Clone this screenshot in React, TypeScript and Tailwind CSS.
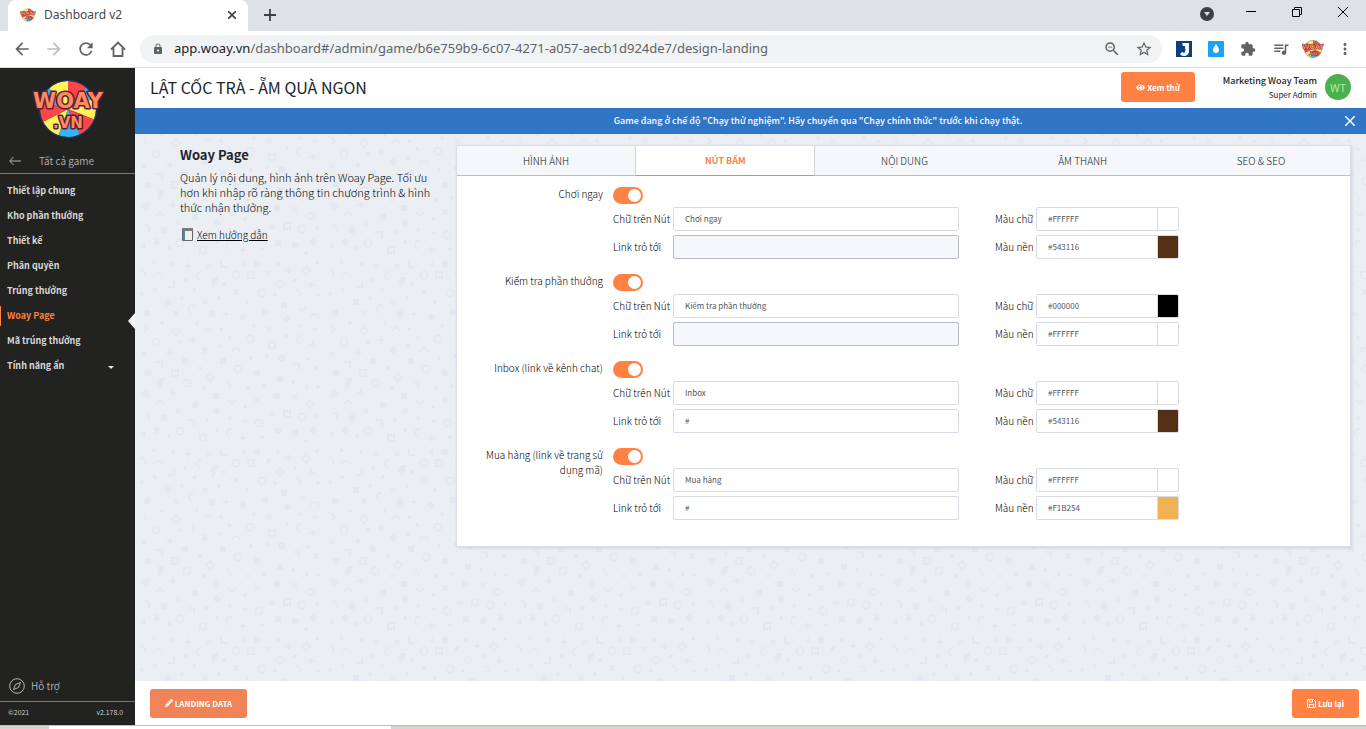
import { useState } from "react";
import type { ReactNode } from "react";
import { FaEye, FaPencilAlt } from "react-icons/fa";
import { MdArrowBack, MdArrowForward, MdExtension, MdLock, MdMoreVert, MdQueueMusic, MdRefresh, MdStarBorder, MdZoomOut } from "react-icons/md";

const ui = "font-['Noto_Sans_CJK_SC','Noto_Sans',sans-serif]";
const chrome = "font-['Noto_Sans','Open_Sans',sans-serif]";

const menu = ["Thiết lập chung", "Kho phần thưởng", "Thiết kế", "Phân quyền", "Trúng thưởng", "Woay Page", "Mã trúng thưởng", "Tính năng ẩn"];
const tabs = ["HÌNH ẢNH", "NÚT BẤM", "NỘI DUNG", "ÂM THANH", "SEO & SEO"];

const groups = [
  { id: "play", title: "Chơi ngay", text: "Chơi ngay", link: null, color: "#FFFFFF", bg: "#543116" },
  { id: "check", title: "Kiểm tra phần thưởng", text: "Kiểm tra phần thưởng", link: null, color: "#000000", bg: "#FFFFFF" },
  { id: "inbox", title: "Inbox (link về kênh chat)", text: "Inbox", link: "#", color: "#FFFFFF", bg: "#543116" },
  { id: "buy", title: "Mua hàng (link về trang sử dụng mã)", text: "Mua hàng", link: "#", color: "#FFFFFF", bg: "#F1B254" },
];

// [kind, x, y] inside one 188x188 tile
const shapes: [string, number, number][] = [
  ["tri", 14, 2], ["dot", 33, 4], ["plus", 48, 6], ["x", 69, 6], ["l", 84, 5], ["left", 103, 4], ["disc", 117, 4], ["dot", 138, 4], ["plus", 149, 10], ["dia", 166, 11], ["dot", 177, 3],
  ["rarc", 4, 13], ["arc", 18, 15], ["larc", 59, 16], ["ring", 96, 15], ["box", 111, 15], ["tri2", 129, 13], ["j", 31, 24], ["dot", 45, 20], ["bolt", 75, 23], ["dot", 84, 24],
  ["dia", 140, 24], ["dot", 155, 20], ["plus", 171, 25], ["tri", 15, 29], ["tri3", 54, 29], ["x", 96, 32], ["ring", 122, 33], ["rarc", 159, 33], ["dot", 2, 34], ["dot", 42, 38], ["dot", 79, 38], ["dot", 135, 35], ["dot", 178, 35],
  ["sq", 28, 42], ["x", 65, 42], ["dot", 107, 42], ["sq", 144, 45], ["larc", 51, 49], ["down", 162, 49], ["disc", 7, 53], ["x", 36, 53], ["disc", 72, 54], ["plus", 86, 54], ["sdia", 103, 57], ["disc", 125, 52], ["sdia", 147, 59], ["arc", 175, 56],
  ["dot", 22, 63], ["left", 56, 63], ["dot", 114, 66], ["dot", 160, 66], ["right", 5, 69], ["dia", 36, 71], ["up", 68, 69], ["dot", 81, 69], ["x", 129, 69], ["dtri", 175, 69],
  ["ring", 16, 82], ["dot", 40, 82], ["plus", 53, 80], ["tri", 90, 77], ["dot", 80, 86], ["ring", 110, 79], ["box", 132, 85], ["dot", 147, 76], ["larc", 159, 80], ["plus", 173, 85],
  ["x", 4, 94], ["plus", 30, 93], ["sdia", 65, 90], ["arc", 96, 90], ["disc", 45, 101], ["sq", 83, 101], ["dot", 111, 98], ["dot", 127, 96], ["disc", 142, 98], ["dot", 168, 99],
  ["seven", 19, 105], ["dot", 60, 108], ["ring", 98, 109], ["seven", 156, 107], ["x", 176, 108], ["disc", 8, 113], ["box", 35, 113], ["dia", 70, 117], ["disc", 117, 113], ["sq", 140, 119],
  ["bolt", 21, 124], ["ring", 47, 123], ["dot", 64, 128], ["rarc", 89, 125], ["dot", 108, 128], ["dot", 124, 126], ["dot", 153, 122], ["left", 166, 127], ["dot", 178, 127],
  ["sdia", 6, 134], ["plus", 33, 133], ["sq", 76, 136], ["disc", 137, 136], ["x", 155, 137], ["up", 20, 142], ["disc", 55, 145], ["down", 92, 142], ["x", 117, 140], ["dia", 170, 144],
  ["x", 38, 151], ["sdia", 77, 151], ["dot", 105, 147], ["rarc", 8, 156], ["disc", 24, 158], ["dot", 90, 158], ["plus", 132, 155], ["box", 147, 154], ["ring", 162, 157], ["dot", 177, 156],
  ["seven", 51, 163], ["dot", 67, 160], ["dtri", 105, 161], ["ring", 119, 163], ["sdia", 17, 170], ["ring", 40, 171], ["dot", 77, 170], ["larc", 89, 173], ["sq", 138, 171], ["disc", 155, 173], ["sdia", 173, 170],
  ["left", 3, 174], ["dot", 29, 176], ["box", 63, 178], ["plus", 103, 178], ["dtri", 122, 177], ["dot", 166, 181],
];

const outlines: Record<string, string> = {
  plus: "M-3.5 0h7M0-3.5v7",
  x: "M-2.5-2.5l5 5M2.5-2.5l-5 5",
  l: "M-3-4v6h6",
  j: "M3-3v6h-6",
  seven: "M-3-3h6v6",
  dia: "M0-4l4 4-4 4-4-4z",
  box: "M-3-3h6v6h-6z",
  arc: "M-4 2a4 4 0 0 1 8 0",
  larc: "M3-4a4 4 0 0 0-2 8",
  rarc: "M-3-3a4 4 0 0 1 3 7",
  up: "M-4 2l4-4 4 4",
  down: "M-4-2l4 4 4-4",
  right: "M-2-4l4 4-4 4",
};
const solids: Record<string, string> = {
  tri: "M-2-3v5h5z",
  tri2: "M-2-2h5l-5 5z",
  tri3: "M2-3v5h-5z",
  left: "M2-3v6l-3-3z",
  dtri: "M-3-1h6l-3 3z",
  sq: "M-3-3h6v6h-6z",
  sdia: "M0-4l4 4-4 4-4-4z",
  bolt: "M-2-6h6l-3 5h2l-7 8 2-6h-3z",
};

function Shape({ kind, x, y }: { kind: string; x: number; y: number }) {
  if (kind === "dot") return <circle cx={x} cy={y} r="1.7" fill="#e1e7ef" />;
  if (kind === "disc") return <circle cx={x} cy={y} r="3.5" fill="#e0e9f2" />;
  if (kind === "ring") return <circle cx={x} cy={y} r="3.6" fill="none" stroke="#e2e8ef" strokeWidth="1.500" />;
  if (solids[kind]) return <path transform={`translate(${x} ${y})`} d={solids[kind]} fill="#e0e8f1" />;
  return <path transform={`translate(${x} ${y})`} d={outlines[kind]} fill="none" stroke="#e2e8ef" strokeWidth="1.500" />;
}

function Confetti() {
  return (
    <svg className="absolute inset-0 w-full h-full" aria-hidden="true">
      <pattern id="confetti" x="5" y="126" width="188" height="188" patternUnits="userSpaceOnUse">
        {shapes.map(([kind, x, y]) => <Shape key={`${x}-${y}`} kind={kind} x={x} y={y} />)}
      </pattern>
      <rect width="100%" height="100%" fill="url(#confetti)" />
    </svg>
  );
}

// start angle and colour of every slice
const wheel: [number, string][] = [
  [0, "#ff4545"], [40, "#35b6f2"], [68, "#fff25a"], [112, "#ff4545"], [155, "#35b6f2"],
  [200, "#fff25a"], [243, "#ff4545"], [285, "#35b6f2"], [318, "#fff25a"],
];

function Logo({ className }: { className: string }) {
  const point = (deg: number) => {
    const a = (deg * Math.PI) / 180;
    return `${(36 + 28 * Math.sin(a)).toFixed(2)} ${(30 - 28 * Math.cos(a)).toFixed(2)}`;
  };
  return (
    <svg viewBox="0 0 72 60" className={className} aria-hidden="true">
      {wheel.map(([from, fill], i) => (
        <path key={from} d={`M36 30L${point(from)}A28 28 0 0 1 ${point(wheel[i + 1]?.[0] ?? 360)}z`} fill={fill} />
      ))}
      <circle cx="36" cy="30" r="28.500" fill="none" stroke="#1c3a6e" strokeWidth="1.200" />
      <g fill="#ff8a5c" stroke="#5b1f3d" strokeWidth="3" strokeLinejoin="round" textAnchor="middle" className="font-['DejaVu_Sans',sans-serif] font-bold [paint-order:stroke]">
        <text x="36" y="29" fontSize="21">WOAY</text>
        <text x="36" y="49" fontSize="15">.VN</text>
      </g>
    </svg>
  );
}

function BrowserBar() {
  return (
    <header className={`${chrome} shrink-0 bg-[#dee1e6] text-[#5f6368]`}>
      <div className="flex h-[31px] items-center pl-2">
        <div className="flex h-full w-[240px] items-center rounded-t-lg bg-white px-3 pb-[2px] text-[#45494d]">
          <Logo className="h-4 w-4" />
          <span className="ml-2 flex-1 text-[12px]">Dashboard v2</span>
          <button aria-label="Close tab">
            <svg viewBox="0 0 8 8" className="h-2 w-2"><path d="M0 0l8 8M8 0L0 8" stroke="#3c4043" strokeWidth="1.600" /></svg>
          </button>
        </div>
        <button aria-label="New tab" className="ml-4 pb-[2px]">
          <svg viewBox="0 0 12 12" className="h-3 w-3"><path d="M6 0v12M0 6h12" stroke="#3c4043" strokeWidth="1.800" /></svg>
        </button>
        <div className="ml-auto flex items-center pr-[18px] pb-2">
          <svg viewBox="0 0 14 14" className="mt-1 mr-8 h-[14px] w-[14px]"><circle cx="7" cy="7" r="7" fill="#3c4043" /><path d="M4 5h6l-3 4z" fill="#dee1e6" /></svg>
          <button aria-label="Minimize" className="mr-[36px] h-px w-[10px] bg-black" />
          <button aria-label="Restore" className="mr-[36px]">
            <svg viewBox="0 0 10 10" className="h-[10px] w-[10px]" fill="none" stroke="#000"><path d="M.5 2.500h7v7h-7zM2.500 2.500v-2h7v7h-2" /></svg>
          </button>
          <button aria-label="Close">
            <svg viewBox="0 0 10 10" className="h-[10px] w-[10px]" stroke="#000"><path d="M0 0l10 10M10 0L0 10" /></svg>
          </button>
        </div>
      </div>
      <div className="flex h-[37px] items-center border-b border-[#dadce0] bg-white pr-3 pl-3">
        <button aria-label="Back"><MdArrowBack className="h-5 w-5" /></button>
        <button aria-label="Forward" className="ml-3"><MdArrowForward className="h-5 w-5 text-[#bcbec1]" /></button>
        <button aria-label="Reload" className="ml-3"><MdRefresh className="h-5 w-5" /></button>
        <button aria-label="Home" className="ml-[14px]">
          <svg viewBox="0 0 16 16" className="h-4 w-4" fill="none" stroke="currentColor" strokeWidth="1.800"><path d="M1 8.500L8 1.500l7 7M3.500 7v8h9V7" /></svg>
        </button>
        <div className="ml-[14px] flex h-7 flex-1 items-center rounded-full bg-[#f1f3f4] pr-[9px] pl-3">
          <MdLock className="h-3 w-3" />
          <p className="ml-[10px] flex-1 text-[13px] whitespace-nowrap"><span className="text-[#202124]">app.woay.vn</span>/dashboard#/admin/game/b6e759b9-6c07-4271-a057-aecb1d924de7/design-landing</p>
          <MdZoomOut className="h-[18px] w-[18px]" />
          <MdStarBorder className="ml-[14px] h-[18px] w-[18px]" />
        </div>
        <div className="ml-[14px] flex items-center gap-4">
          <svg viewBox="0 0 16 16" className="h-4 w-4"><path fill="#0b4080" d="M0 0h16v16H0z" /><path d="M6 2h7v9q-1 4-5 4-3 0-4-2l2-2q4 2 3-2V5H7z" fill="#fff" /><path d="M9 5l-3 4h2l-1 3 3-4H8z" fill="#0b4080" /></svg>
          <svg viewBox="0 0 16 16" className="h-4 w-4"><rect width="16" height="16" rx="1" fill="#1da1f2" /><path d="M8 3q3 4 3 6a3 3 0 0 1-6 0q0-2 3-6" fill="#fff" /></svg>
          <MdExtension className="h-4 w-4" />
          <MdQueueMusic className="h-[18px] w-[18px]" />
          <Logo className="-ml-1 h-5 w-[22px]" />
          <button aria-label="Menu" className="-ml-1"><MdMoreVert className="h-[18px] w-[18px]" /></button>
        </div>
      </div>
    </header>
  );
}

function Sidebar() {
  return (
    <aside className="flex w-[135px] shrink-0 flex-col bg-[#222220] text-[#d8d8d8]">
      <Logo className="mt-[11px] h-[60px] w-[72px] self-center" />
      <a href="#games" className="mt-[9px] flex h-[26px] items-center border-b border-[#777] pl-[9px] text-[10px] text-[#b5b5b5]">
        <svg viewBox="0 0 12 8" className="h-2 w-3" fill="none" stroke="currentColor"><path d="M4.500 0L.7 4l3.800 4M1 4h11" /></svg>
        <span className="ml-[18px]">Tất cả game</span>
      </a>
      <nav className="mt-1 flex flex-col text-[9px] font-bold">
        {menu.map(item => (
          <a key={item} href="#menu" className={item === "Woay Page" ? "relative flex h-[25px] items-center pl-[7px] text-[#ff8143] before:absolute before:left-0 before:h-5 before:w-px before:bg-[#ff8143]" : "relative flex h-[25px] items-center pl-[7px]"}>
            {item}
            {item === "Woay Page" && <svg viewBox="0 0 7 16" className="absolute top-[10px] right-0 h-4 w-[7px]"><path d="M7 0v16L0 8z" fill="#f4f3f0" /></svg>}
            {item === "Tính năng ẩn" && <svg viewBox="0 0 6 3" className="mt-1 mr-[21px] ml-auto h-[3px] w-[6px]"><path d="M0 0h6L3 3z" fill="#e6e6e6" /></svg>}
          </a>
        ))}
      </nav>
      <a href="#help" className="mt-auto flex h-8 items-center gap-[6px] border-b border-[#777] pl-[9px] text-[10px] text-[#b5b5b5]">
        <svg viewBox="0 0 16 16" className="h-4 w-4" fill="none" stroke="currentColor"><circle cx="8" cy="8" r="7.300" /><path d="M11.500 4.500l-2 5-5 2 2-5z" /></svg>
        Hỗ trợ
      </a>
      <div className="flex h-[23px] items-center justify-between pr-3 pb-[2px] pl-2 text-[7px]">
        <span>©2021</span>
        <span>v2.178.0</span>
      </div>
    </aside>
  );
}

function Toggle({ id }: { id: string }) {
  const [on, setOn] = useState(true);
  return (
    <span className="relative flex h-[17px] w-[30px]">
      <input id={id} type="checkbox" checked={on} onChange={e => setOn(e.target.checked)} className="peer h-full w-full appearance-none rounded-full bg-[#c9cdd6] checked:bg-[#ff8143]" />
      <span className="pointer-events-none absolute top-[2px] left-[2px] h-[13px] w-[13px] rounded-full bg-white peer-checked:left-[15px]" />
    </span>
  );
}

function TextField({ id, label, value }: { id: string; label: string; value: string | null }) {
  return (
    <>
      <label htmlFor={id} className="pb-[2px] whitespace-nowrap">{label}</label>
      <input id={id} defaultValue={value ?? ""} disabled={value === null} className="h-6 w-full min-w-0 rounded-xs border border-[#d8dbe3] bg-white px-[11px] pb-[2px] text-[8px] font-normal text-[#55555c] disabled:border-[#b9bdc7] disabled:bg-[#f5f7fb]" />
    </>
  );
}

function ColorField({ id, label, value }: { id: string; label: string; value: string }) {
  return (
    <>
      <label htmlFor={id} className="col-start-4 pb-[2px] whitespace-nowrap">{label}</label>
      <div className="flex h-6 min-w-0 overflow-hidden rounded-xs border border-[#d8dbe3]">
        <input id={id} defaultValue={value} className="min-w-0 flex-1 bg-white px-[11px] pb-[2px] text-[8px] font-normal text-[#55555c]" />
        <button aria-label={`${label} ${value}`} className="w-[21px] border-l border-[#d8dbe3]" style={{ backgroundColor: value }} />
      </div>
    </>
  );
}

function Group({ group }: { group: (typeof groups)[number] }) {
  return (
    <div className="mb-[14px] flex h-[73px] font-light text-black">
      <label htmlFor={group.id} className="w-[146px] shrink-0 pl-5 text-right">{group.title}</label>
      <div className="mt-px ml-[10px] min-w-0 flex-1">
        <Toggle id={group.id} />
        <div className="mt-[3px] grid grid-cols-[60px_2fr_36px_41px_1fr] items-center gap-y-1 pr-[171px]">
          <TextField id={`${group.id}-text`} label="Chữ trên Nút" value={group.text} />
          <ColorField id={`${group.id}-color`} label="Màu chữ" value={group.color} />
          <TextField id={`${group.id}-link`} label="Link trỏ tới" value={group.link} />
          <ColorField id={`${group.id}-bg`} label="Màu nền" value={group.bg} />
        </div>
      </div>
    </div>
  );
}

function SaveIcon() {
  return (
    <svg viewBox="0 0 9 9" className="h-[9px] w-[9px]" fill="none" stroke="currentColor">
      <path d="M.5.5h6l2 2v6h-8zM2.500.5v2.500h3V.5M2.500 8.500v-3h4v3" />
    </svg>
  );
}

function ActionButton({ icon, children, className }: { icon: ReactNode; children: ReactNode; className: string }) {
  return (
    <button className={`flex items-center justify-center gap-[2px] rounded-[3px] text-[8px] font-bold text-white ${className}`}>
      {icon}
      {children}
    </button>
  );
}

export default function App() {
  const [tab, setTab] = useState("NÚT BẤM");
  return (
    <div className="flex h-screen flex-col overflow-hidden bg-[#d4d4d3]">
      <BrowserBar />
      <div className={`${ui} flex min-h-0 flex-1 text-[10px] leading-[15px] font-[350] text-[#212529]`}>
        <Sidebar />
        <div className="flex min-w-0 flex-1 flex-col bg-[#ebeff4]">
          <div className="flex h-10 shrink-0 items-center bg-white pr-[15px] pb-[2px] pl-[15px]">
            <h1 className="flex-1 text-[16px] font-normal">LẬT CỐC TRÀ - ẴM QUÀ NGON</h1>
            <ActionButton icon={<FaEye className="h-[9px] w-[9px]" />} className="h-[30px] w-[74px] bg-[#ff8143]">Xem thử</ActionButton>
            <div className="w-[122px] text-right">
              <p className="text-[9px] font-medium">Marketing Woay Team</p>
              <p className="text-[8px] leading-[14px] font-normal">Super Admin</p>
            </div>
            <span className="ml-2 flex h-[26px] w-[26px] items-center justify-center rounded-full bg-[#4caf50] text-[11px] font-normal text-[#a5f5a0]">WT</span>
          </div>
          <div className="flex h-[26px] shrink-0 items-center bg-[#3175c5] pr-[11px] text-white">
            <p className="flex-1 pb-px pl-[156px] text-center text-[9px] font-medium">Game đang ở chế độ "Chạy thử nghiệm". Hãy chuyển qua "Chạy chính thức" trước khi chạy thật.</p>
            <button aria-label="Đóng">
              <svg viewBox="0 0 10 10" className="h-[10px] w-[10px]" stroke="#fff" strokeWidth="1.500"><path d="M0 0l10 10M10 0L0 10" /></svg>
            </button>
          </div>
          <main className="relative flex min-h-0 flex-1 items-start">
            <Confetti />
            <section className="relative w-[321px] shrink-0 pt-[12px] pr-4 pl-[45px]">
              <h2 className="text-[13px] leading-[18px] font-bold">Woay Page</h2>
              <p className="mt-[6px] text-[11px] font-light text-black">Quản lý nội dung, hình ảnh trên Woay Page. Tối ưu hơn khi nhập rõ ràng thông tin chương trình & hình thức nhận thưởng.</p>
              <a href="#guide" className="mt-3 flex items-center gap-1 pl-[2px] font-light text-black">
                <svg viewBox="0 0 11 13" className="h-[13px] w-[11px]"><path d="M.5 1h10v11.500H.5z" fill="#f2efe9" stroke="#686868" /><path d="M0 0h11v3H0z" fill="#7b7b7b" /><path d="M1 3h2v9H1z" fill="#438bb5" /></svg>
                <span className="underline">Xem hướng dẫn</span>
              </a>
            </section>
            <section className="relative mt-[11px] mr-[15px] h-[402px] min-w-0 flex-1 border border-[#dbdfe8] bg-white shadow-[1px_1px_3px_#ccd1da]">
              <div role="tablist" className="flex h-[30px] bg-[#f5f7fb]">
                {tabs.map(name => (
                  <button
                    key={name}
                    role="tab"
                    aria-selected={name === tab}
                    onClick={() => setTab(name)}
                    className={name === tab ? "flex-1 border-x border-b border-x-[#cfd3dc] border-b-[#ff8143] bg-white text-[9px] font-bold text-[#ff8143]" : "flex-1 border-b border-[#b9bdc7] font-light text-[#101828]"}
                  >
                    {name}
                  </button>
                ))}
              </div>
              <div className="flex flex-col pt-[10px]">
                {groups.map(group => <Group key={group.id} group={group} />)}
              </div>
            </section>
          </main>
          <footer className="flex h-[44px] shrink-0 items-center justify-between bg-white pr-[7px] pl-[15px]">
            <ActionButton icon={<FaPencilAlt className="h-2 w-2" />} className="h-[29px] w-[97px] bg-[#f08358]">LANDING DATA</ActionButton>
            <ActionButton icon={<SaveIcon />} className="h-[29px] w-[67px] bg-[#ff8143]">Lưu lại</ActionButton>
          </footer>
        </div>
      </div>
      <div className="flex h-1 shrink-0 border-t border-[#bdbdbd]">
        <div className="ml-[49px] w-[342px] bg-white" />
      </div>
    </div>
  );
}
